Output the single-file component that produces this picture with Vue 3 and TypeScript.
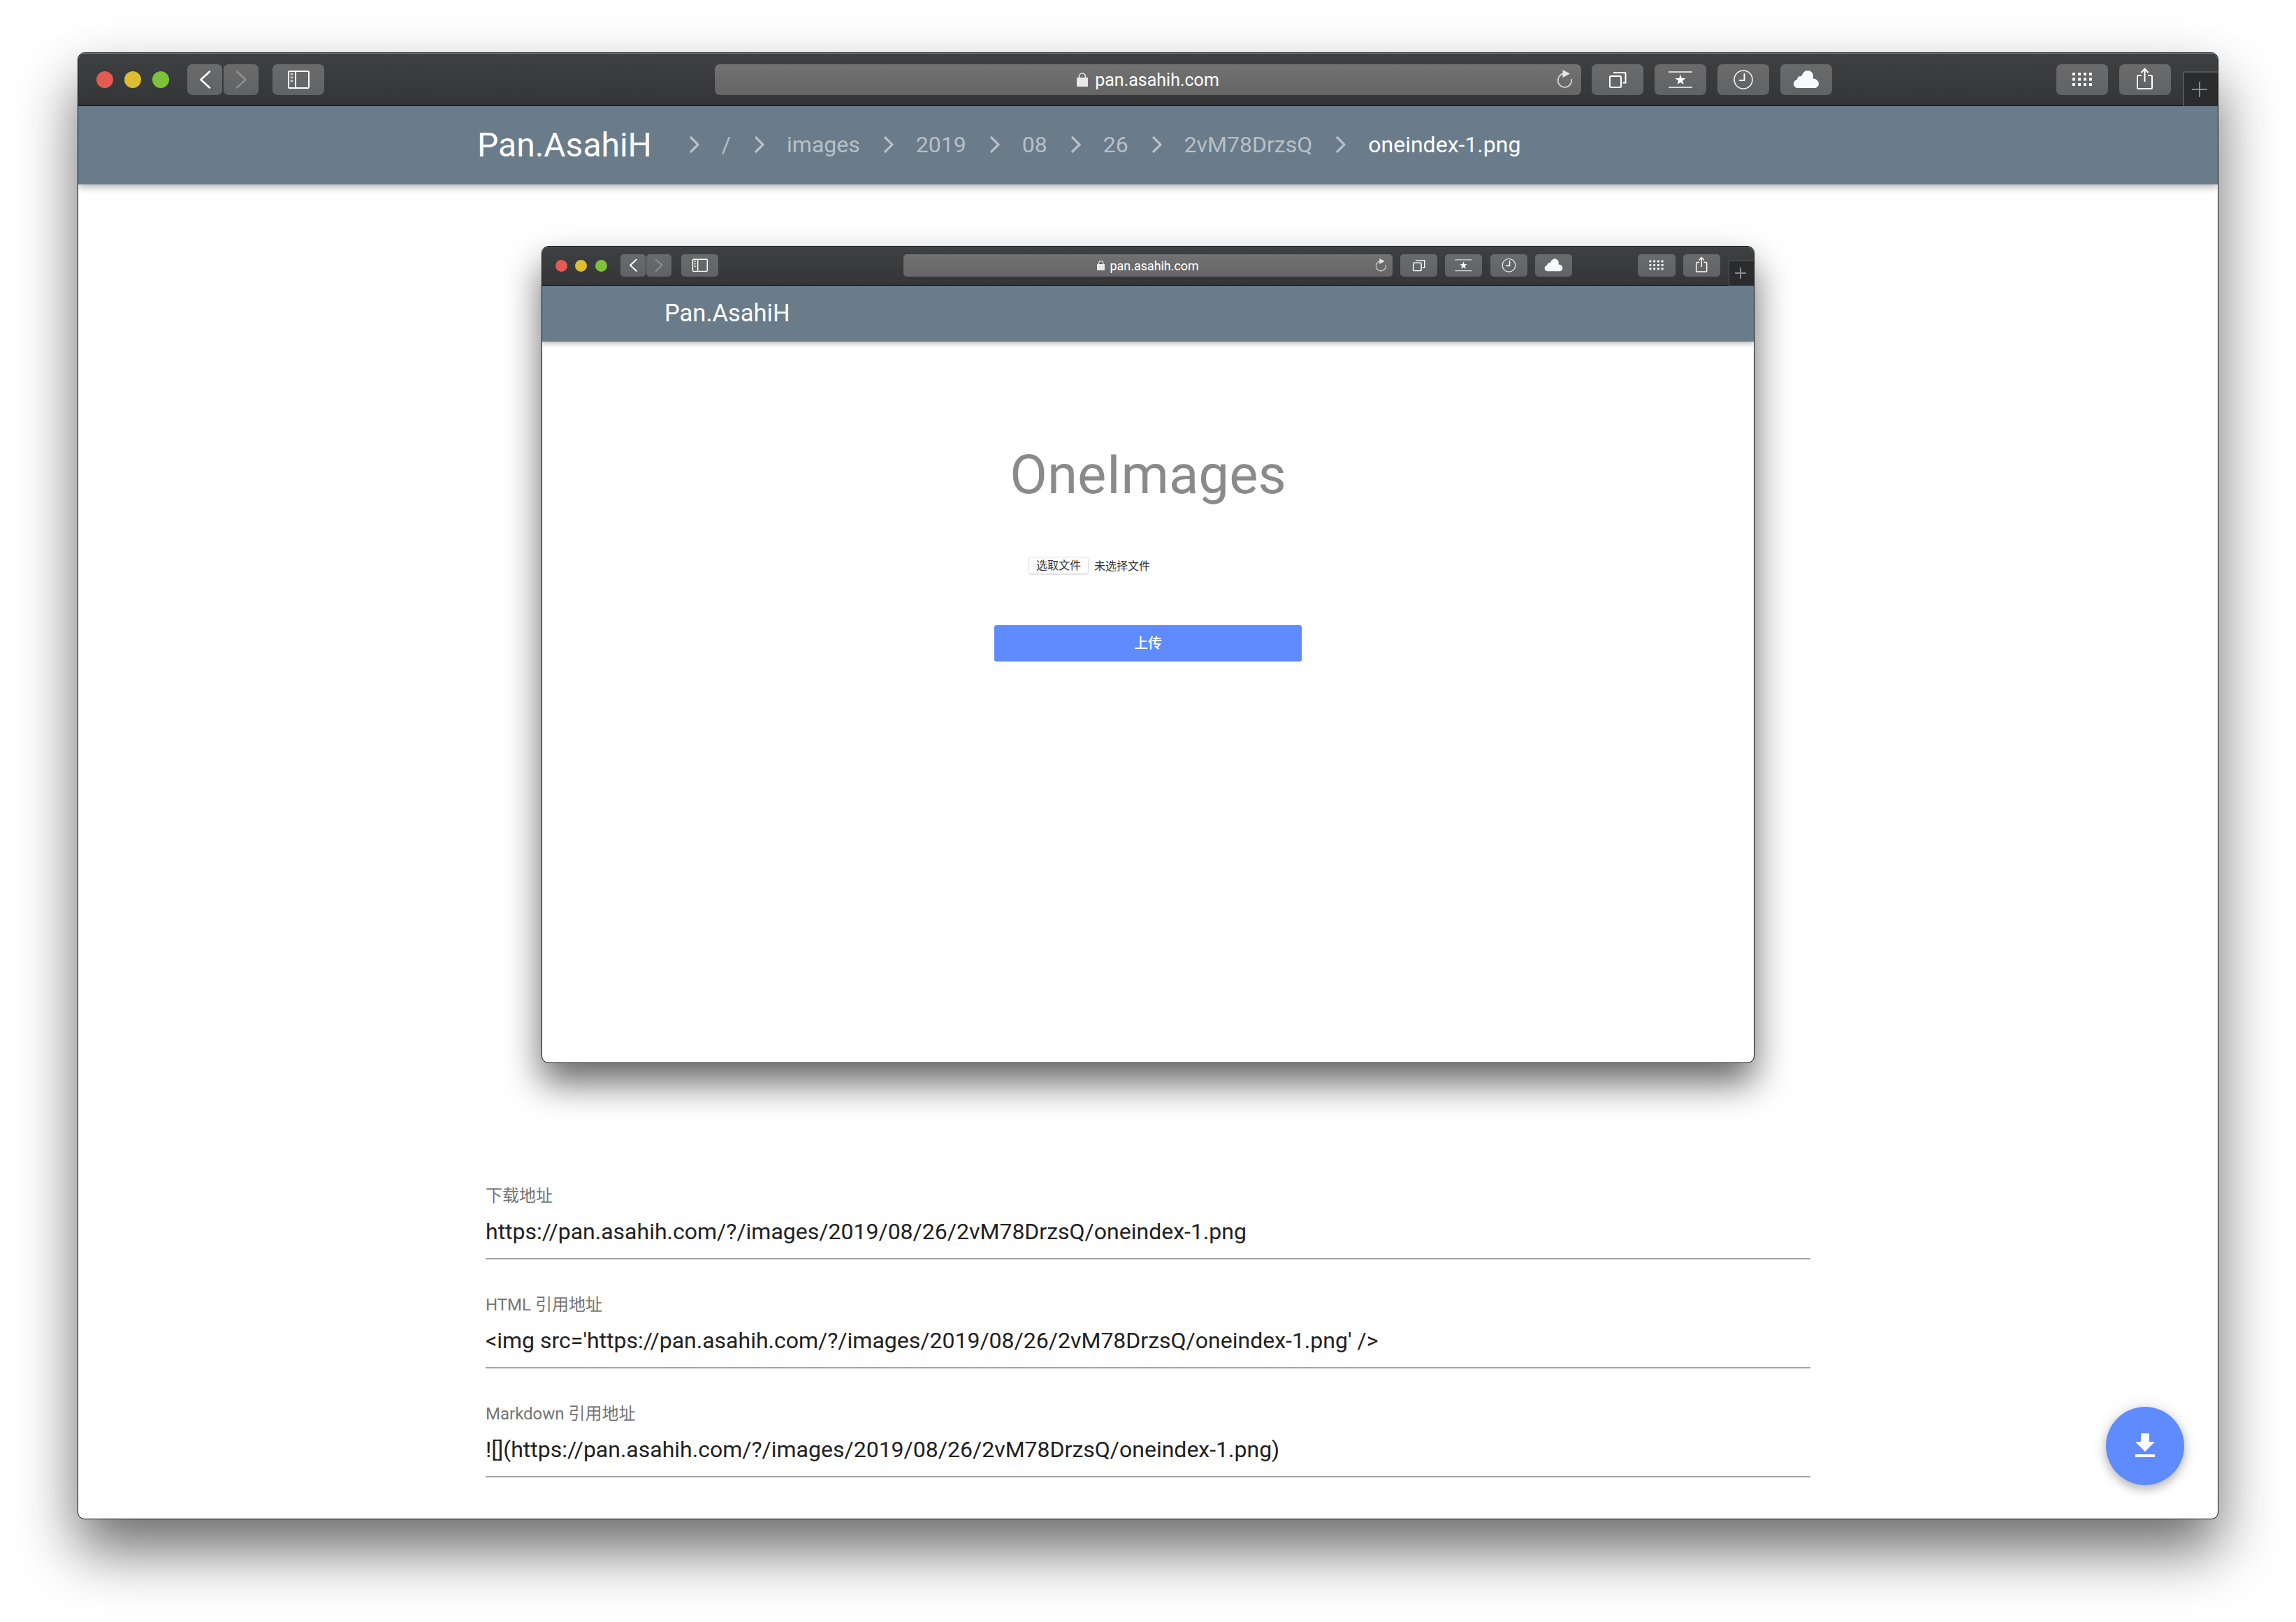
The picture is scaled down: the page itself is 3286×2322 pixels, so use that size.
<script setup lang="ts">
const crumbs = ['/', 'images', '2019', '08', '26', '2vM78DrzsQ', 'oneindex-1.png']
const tools = ['tabs', 'star', 'clock', 'cloud']
const fields = [
  {
    label: '下载地址',
    value: 'https://pan.asahih.com/?/images/2019/08/26/2vM78DrzsQ/oneindex-1.png'
  },
  {
    label: 'HTML 引用地址',
    value: "<img src='https://pan.asahih.com/?/images/2019/08/26/2vM78DrzsQ/oneindex-1.png' />"
  },
  {
    label: 'Markdown 引用地址',
    value: '![](https://pan.asahih.com/?/images/2019/08/26/2vM78DrzsQ/oneindex-1.png)'
  }
]
</script>

<template>
  <div class="page">
    <svg class="sprite" width="0" height="0" aria-hidden="true">
      <symbol id="back" viewBox="0 0 50 44">
        <path d="M32 10.5 19.5 22 32 33.5" fill="none" stroke="#fff" stroke-width="2.6" stroke-linecap="round" stroke-linejoin="round" />
      </symbol>
      <symbol id="forward" viewBox="0 0 50 44">
        <path d="M19 10.5 31.5 22 19 33.5" fill="none" stroke="#8f8f90" stroke-width="2.6" stroke-linecap="round" stroke-linejoin="round" />
      </symbol>
      <symbol id="sidebar" viewBox="0 0 74 44">
        <rect x="23" y="10" width="29" height="24" rx="1.5" fill="none" stroke="#fff" stroke-width="2" />
        <path d="M33 10v24" stroke="#fff" stroke-width="2" />
        <path d="M25.5 14h4M25.5 19h4M25.5 24h4" stroke="#c4c4c4" stroke-width="2.6" />
      </symbol>
      <symbol id="tabs" viewBox="0 0 74 44">
        <rect x="26" y="17" width="16" height="16" rx="1.5" fill="none" stroke="#fff" stroke-width="2" />
        <path d="M31 12h16.5a1 1 0 0 1 1 1v13.500h-4" fill="none" stroke="#fff" stroke-width="2" />
      </symbol>
      <symbol id="star" viewBox="0 0 74 44">
        <path d="M20 11h34M20 33h34" stroke="#d6d6d6" stroke-width="2" />
        <polygon points="37,14.500 38.900,19.900 44.600,20 40,23.500 41.700,29 37,25.700 32.300,29 34,23.500 29.400,20 35.100,19.900" fill="#fff" />
      </symbol>
      <symbol id="clock" viewBox="0 0 74 44">
        <circle cx="37" cy="22" r="13" fill="none" stroke="#f2f2f2" stroke-width="1.6" />
        <path d="M38.500 13v10H31" fill="none" stroke="#fff" stroke-width="2" />
      </symbol>
      <symbol id="cloud" viewBox="0 0 74 44">
        <path d="M25 34C21.500 34 19 31.300 19 28c0-3 2-5.500 5-6 0-3.500 3.500-5.800 6.300-4.700C31.800 12.300 35 9 39.300 9c4.700 0 8 3.800 7.800 9 0 1 0 1.700-.1 2.400 4.700.4 8 3.600 8 7.600 0 3.500-2.700 6-6 6z" fill="#f7f9fc" />
      </symbol>
      <symbol id="grid" viewBox="0 0 74 44">
        <g fill="#fff">
          <template v-for="y in [12, 19.500, 27]" :key="y">
            <rect v-for="x in [23, 31, 39, 47]" :key="x" :x="x" :y="y" width="4" height="4" />
          </template>
        </g>
      </symbol>
      <symbol id="share" viewBox="0 0 74 44">
        <path d="M32 16h-4.500a1.500 1.500 0 0 0-1.500 1.500v16a1.500 1.500 0 0 0 1.500 1.500h18a1.500 1.500 0 0 0 1.500-1.500v-16a1.500 1.500 0 0 0-1.500-1.500H41" fill="none" stroke="#fff" stroke-width="2" />
        <path d="M36.500 6.500V25M31.500 12l5-5.500 5 5.500" fill="none" stroke="#fff" stroke-width="2" />
      </symbol>
      <symbol id="reload" viewBox="0 0 30 30">
        <path d="M12.500 5.500A9.800 9.800 0 1 0 24 13" fill="none" stroke="#d2d2d2" stroke-width="1.800" />
        <polygon points="11.500,0 22,5.500 11.500,11" fill="#e4e4e4" />
      </symbol>
      <symbol id="lock" viewBox="0 0 16 20">
        <path d="M3.500 8V5.500a4.500 4.500 0 0 1 9 0V8" fill="none" stroke="#e8e8e8" stroke-width="1.600" />
        <rect y="7" width="16" height="13" rx="1" fill="#e8e8e8" />
      </symbol>
    </svg>

    <section class="browser">
      <header class="toolbar">
        <div class="left">
          <span class="light red"></span>
          <span class="light yellow"></span>
          <span class="light green"></span>
          <div class="pair">
            <span class="btn small"><svg><use href="#back" /></svg></span>
            <span class="btn small"><svg><use href="#forward" /></svg></span>
          </div>
          <span class="btn"><svg><use href="#sidebar" /></svg></span>
        </div>
        <div class="address">
          <svg class="lock"><use href="#lock" /></svg>
          <span>pan.asahih.com</span>
          <svg class="reload"><use href="#reload" /></svg>
        </div>
        <div class="tools">
          <span v-for="tool in tools" :key="tool" class="btn"><svg><use :href="`#${tool}`" /></svg></span>
        </div>
        <div class="tools right">
          <span class="btn"><svg><use href="#grid" /></svg></span>
          <span class="btn"><svg><use href="#share" /></svg></span>
        </div>
        <div class="new-tab"></div>
      </header>

      <nav class="appbar">
        <span class="brand">Pan.AsahiH</span>
        <ul class="crumbs">
          <li v-for="(crumb, i) in crumbs" :key="crumb" :class="{ current: i === crumbs.length - 1 }">
            <svg class="chevron" viewBox="0 0 15 26"><path d="M2 2l11 11L2 24" /></svg>
            <span>{{ crumb }}</span>
          </li>
        </ul>
      </nav>

      <main class="content">
        <section class="browser shot">
          <header class="toolbar">
            <div class="left">
              <span class="light red"></span>
              <span class="light yellow"></span>
              <span class="light green"></span>
              <div class="pair">
                <span class="btn small"><svg><use href="#back" /></svg></span>
                <span class="btn small"><svg><use href="#forward" /></svg></span>
              </div>
              <span class="btn"><svg><use href="#sidebar" /></svg></span>
            </div>
            <div class="address">
              <svg class="lock"><use href="#lock" /></svg>
              <span>pan.asahih.com</span>
              <svg class="reload"><use href="#reload" /></svg>
            </div>
            <div class="tools">
              <span v-for="tool in tools" :key="tool" class="btn"><svg><use :href="`#${tool}`" /></svg></span>
            </div>
            <div class="tools right">
              <span class="btn"><svg><use href="#grid" /></svg></span>
              <span class="btn"><svg><use href="#share" /></svg></span>
            </div>
            <div class="new-tab"></div>
          </header>

          <nav class="appbar">
            <span class="brand">Pan.AsahiH</span>
          </nav>

          <div class="uploader">
            <h1>OneImages</h1>
            <div class="picker">
              <span class="pick-btn">选取文件</span>
              <span>未选择文件</span>
            </div>
            <div class="submit">上传</div>
          </div>
        </section>

        <div class="fields">
          <label v-for="field in fields" :key="field.label" class="field">
            <span class="field-label">{{ field.label }}</span>
            <span class="field-value">{{ field.value }}</span>
          </label>
        </div>
      </main>

      <button class="fab" type="button" aria-label="下载">
        <svg viewBox="0 0 24 24" width="48" height="48"><path d="M19 9h-4V3H9v6H5l7 7 7-7zM5 18v2h14v-2H5z" fill="#fff" /></svg>
      </button>
    </section>
  </div>
</template>

<style>
html,
body {
  background: #fff;
  overflow: hidden;
}
</style>

<style scoped>
.page {
  width: 3286px;
  height: 2322px;
  padding: 75px 111px 0;
  box-sizing: border-box;
  font-family: Roboto, 'Noto Sans CJK SC', sans-serif;
}

.sprite {
  position: absolute;
}

.browser {
  position: relative;
  height: 2100px;
  box-sizing: border-box;
  border: 1px solid #0c0c0c;
  border-radius: 10px;
  overflow: hidden;
  background: #fff;
  box-shadow: 0 44px 84px rgba(0, 0, 0, 0.58);
}

.toolbar {
  display: flex;
  align-items: flex-start;
  height: 76px;
  box-sizing: border-box;
  padding-top: 16px;
  background: linear-gradient(#3f4042, #343537);
  border-bottom: 1px solid #0d0d0d;
  box-shadow: inset 0 1px 0 #707070;
}

.left {
  display: flex;
  align-items: center;
  width: 911px;
  flex: none;
  box-sizing: border-box;
  padding-left: 26px;
}

.light {
  width: 24px;
  height: 24px;
  border-radius: 50%;
  margin-right: 16px;
}

.red {
  background: #e45b53;
}

.yellow {
  background: #dcbd34;
}

.green {
  background: #7cc23a;
}

.pair {
  display: flex;
  gap: 2px;
  margin: 0 20px 0 10px;
}

.btn {
  display: block;
  width: 74px;
  height: 44px;
  flex: none;
  border-radius: 7px;
  background: linear-gradient(#6b6b6c, #616263);
}

.btn.small {
  width: 50px;
}

.btn svg {
  display: block;
  width: 100%;
  height: 100%;
}

.address {
  position: relative;
  display: flex;
  align-items: center;
  justify-content: center;
  gap: 10px;
  width: 1240px;
  height: 44px;
  flex: none;
  border-radius: 7px;
  background: linear-gradient(#727272, #656565);
  color: #fff;
  font-size: 25px;
}

.lock {
  width: 16px;
  height: 20px;
  margin-top: -1px;
}

.reload {
  position: absolute;
  top: 8px;
  right: 8px;
  width: 30px;
  height: 30px;
}

.tools {
  display: flex;
  gap: 16px;
  margin-left: 15px;
}

.tools.right {
  margin-left: auto;
}

.new-tab {
  position: relative;
  width: 50px;
  height: 50px;
  flex: none;
  align-self: flex-end;
  margin: 0 0 -1px 17px;
  box-sizing: border-box;
  background: #2a2b2c;
  border-left: 2px solid #555;
  border-top: 2px solid #555;
}

.new-tab::before,
.new-tab::after {
  content: '';
  position: absolute;
  background: #8c8c8c;
}

.new-tab::before {
  left: 11px;
  top: 23px;
  width: 22px;
  height: 2px;
}

.new-tab::after {
  left: 21px;
  top: 13px;
  width: 2px;
  height: 22px;
}

.appbar {
  display: flex;
  align-items: center;
  height: 112px;
  box-sizing: border-box;
  padding: 0 0 2px 571px;
  background: #6a7b89;
  box-shadow: 0 4px 10px rgba(0, 0, 0, 0.3);
  color: #fff;
}

.brand {
  font-size: 48px;
}

.crumbs {
  display: flex;
  align-items: center;
  gap: 33px;
  margin: 0 0 0 53px;
  padding: 0;
  list-style: none;
  color: #b6c0c8;
  font-size: 32px;
}

.crumbs li {
  display: flex;
  align-items: center;
  gap: 32px;
}

.crumbs .current {
  color: #fff;
}

.chevron {
  width: 15px;
  height: 26px;
  fill: none;
  stroke: #b6c0c8;
  stroke-width: 3.2;
}

.content {
  padding-top: 88px;
}

/* screenshot of the upload page inside the page */
.shot {
  width: 1736px;
  height: 1170px;
  margin: 0 auto;
  box-shadow: 0 28px 52px rgba(0, 0, 0, 0.6);
}

.shot .toolbar {
  zoom: 0.7167;
  height: 78px;
}

.shot .left {
  width: 721px;
}

.shot .address {
  width: 977px;
}

.shot .appbar {
  height: 80px;
  padding: 0 0 2px 175px;
  box-shadow: 0 3px 7px rgba(0, 0, 0, 0.28);
}

.shot .brand {
  font-size: 34.5px;
}

.uploader {
  width: 440px;
  margin: 0 auto;
}

.uploader h1 {
  width: 600px;
  margin: 143px 0 0 -80px;
  color: #8a8a8a;
  font-size: 78px;
  font-weight: 400;
  line-height: 96px;
  text-align: center;
}

.picker {
  display: flex;
  align-items: center;
  gap: 8px;
  height: 25px;
  margin-top: 69px;
  padding-left: 49px;
  color: #333;
  font-size: 16px;
}

.pick-btn {
  width: 86px;
  height: 25px;
  box-sizing: border-box;
  border: 1px solid #dcdcdc;
  border-radius: 4px;
  box-shadow: 0 1px 1px rgba(0, 0, 0, 0.12);
  line-height: 23px;
  text-align: center;
}

.submit {
  height: 52px;
  margin-top: 73px;
  border-radius: 3px;
  background: #5e8bfd;
  color: #fff;
  font-size: 20px;
  font-weight: 500;
  line-height: 52px;
  text-align: center;
}

.fields {
  width: 1896px;
  margin: 174px auto 0;
}

.field {
  display: flex;
  flex-direction: column;
  gap: 11px;
  margin-bottom: 49px;
  padding-bottom: 14px;
  border-bottom: 2px solid #a3a3a3;
}

.field-label {
  color: #757575;
  font-size: 24px;
  line-height: 32px;
}

.field-value {
  color: #212121;
  font-size: 32px;
  line-height: 48px;
  white-space: nowrap;
}

.fab {
  position: absolute;
  right: 48px;
  bottom: 48px;
  display: flex;
  align-items: center;
  justify-content: center;
  width: 112px;
  height: 112px;
  padding: 0;
  border: 0;
  border-radius: 50%;
  background: #5e8bfd;
  box-shadow: 0 6px 14px rgba(0, 0, 0, 0.24), 0 0 24px rgba(0, 0, 0, 0.1);
}
</style>
